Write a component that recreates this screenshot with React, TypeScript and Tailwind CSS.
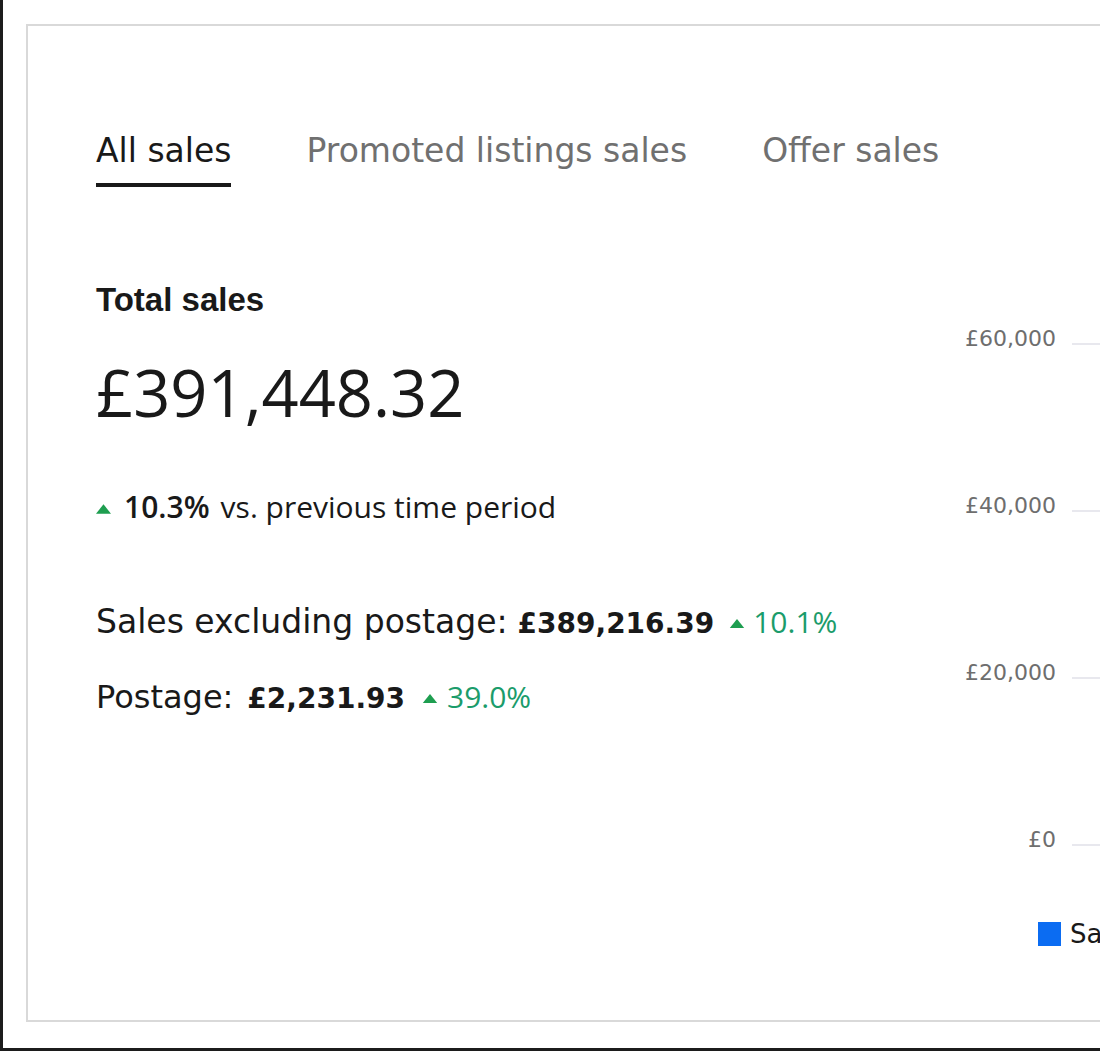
const arial = { fontFamily: '"DejaVu Sans", "Liberation Sans", sans-serif' };
const market = { fontFamily: '"Open Sans", "DejaVu Sans", sans-serif' };

const tabs = ['All sales', 'Promoted listings sales', 'Offer sales'];
const ticks = ['£60,000', '£40,000', '£20,000', '£0'];

function Up({ className }: { className: string }) {
  return (
    <svg viewBox="0 0 16 10" className={`inline-block ${className}`} aria-hidden>
      <path d="M8 0 L16 10 L0 10 Z" fill="#1e9e50" />
    </svg>
  );
}

export default function App() {
  return (
    <div className="w-[1100px] h-[1051px] overflow-hidden bg-white border-l-[3px] border-b-[3px] border-[#1c1c1c]">
      <div className="ml-[23px] mt-[24px] w-[1200px] h-[998px] bg-white border-2 border-[#d9d9d9] flex">
        {/* summary column */}
        <div className="w-[912px] shrink-0 pl-[68px] pt-[105px] text-[#191919]">
          <div className="flex gap-[75px] whitespace-nowrap" style={arial}>
            {tabs.map((t, i) => (
              <button
                key={t}
                className={
                  i === 0
                    ? 'shrink-0 text-[33px] leading-[40px] pb-[12px] border-b-4 border-[#191919] text-[#191919]'
                    : 'shrink-0 text-[33px] leading-[40px] pb-[12px] border-b-4 border-transparent text-[#707070]'
                }
              >
                {t}
              </button>
            ))}
          </div>

          <h2
            className="mt-[94px] text-[33px] leading-[38px] font-bold"
            style={{ fontFamily: '"Liberation Sans", Arial, sans-serif' }}
          >
            Total sales
          </h2>

          <div className="mt-[41px] text-[65px] leading-none" style={market}>
            £391,448.32
          </div>

          <p className="mt-[64px] text-[30px] leading-[36px]" style={market}>
            <Up className="w-[15px] h-[10px] mb-[2px]" />
            <span className="ml-[13px] font-semibold">10.3%</span>
            <span className="ml-[11px]">vs. previous time period</span>
          </p>

          <p className="mt-[76px] text-[32px] leading-[40px] whitespace-nowrap">
            <span className="text-[33px]" style={arial}>Sales excluding postage:</span>
            <span className="ml-[10px] text-[28px] font-bold" style={arial}>
              £389,216.39
            </span>
            <Up className="ml-[15px] w-[16px] h-[9px] mb-[1px]" />
            <span className="ml-[8px] text-[30px] text-[#1b9c6b]" style={market}>
              10.1%
            </span>
          </p>

          <p className="mt-[32px] text-[32px] leading-[40px] whitespace-nowrap">
            <span style={arial}>Postage:</span>
            <span className="ml-[14px] text-[28px] font-bold" style={arial}>
              £2,231.93
            </span>
            <Up className="ml-[17px] w-[16px] h-[9px] mb-[1px]" />
            <span className="ml-[9px] text-[30px] text-[#1b9c6b]" style={market}>
              39.0%
            </span>
          </p>
        </div>

        {/* chart column */}
        <div className="flex-1 pt-[301px]" style={arial}>
          <div className="flex flex-col gap-[143px]">
            {ticks.map(t => (
              <div key={t} className="flex items-center h-[24px]">
                <span className="w-[116px] text-right text-[22px] leading-[24px] text-[#6e6e6e]">{t}</span>
                <span className="ml-[16px] mt-[10px] h-[2px] flex-1 bg-[#e8e8ee]" />
              </div>
            ))}
          </div>
          <div className="mt-[70px] ml-[98px] flex items-center gap-[9px] whitespace-nowrap">
            <span className="w-[23px] h-[24px] bg-[#0b6cf2]" />
            <span className="text-[26px] leading-[24px] text-[#191919]">Sales</span>
          </div>
        </div>
      </div>
    </div>
  );
}
